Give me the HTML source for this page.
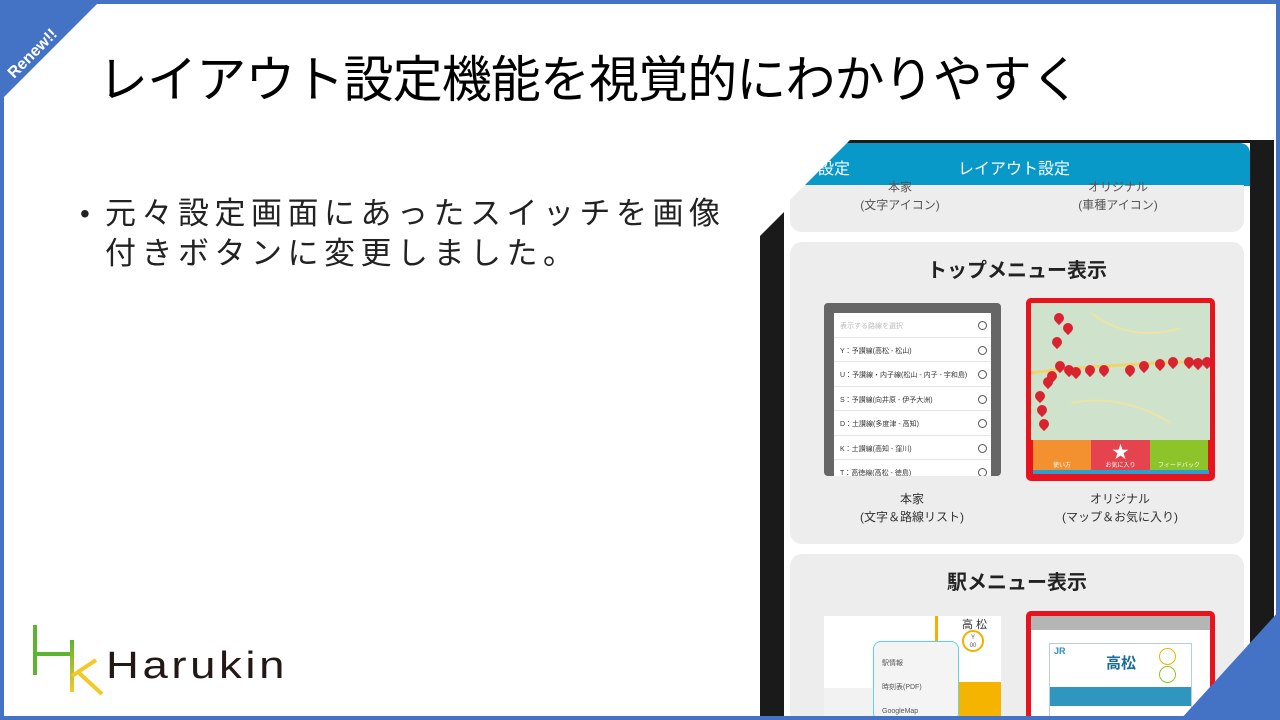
<!DOCTYPE html>
<html><head><meta charset="utf-8"><style>
*{margin:0;padding:0;box-sizing:border-box}
html,body{width:1280px;height:720px;overflow:hidden}
body{background:#fff;font-family:"Liberation Sans","Noto Sans CJK JP",sans-serif;position:relative}
.abs{position:absolute}
.frame{left:0;top:0;width:1280px;height:720px;border:4px solid #4472c4}
.title{left:98px;top:40px;font-size:50px;color:#000;white-space:nowrap;letter-spacing:-0.9px}
.bullet{left:105px;top:194px;font-size:31px;line-height:40px;color:#222;letter-spacing:5.5px;white-space:nowrap}
.card{background:#ededed;border-radius:12px}
.t{font-size:12px;color:#333;text-align:center;line-height:18px}
.pin{position:absolute;width:10px;height:10px;background:#d9232e;border-radius:50% 50% 50% 0;transform:rotate(-45deg)}
.row{height:24.5px;border-bottom:1px solid #e6e6e6;font-size:7px;color:#333;padding:8px 0 0 6px;position:relative}
.row:after{content:"";position:absolute;right:4px;top:8px;width:7px;height:7px;border:1px solid #555;border-radius:50%}
</style></head><body>
<div class="abs title">レイアウト設定機能を視覚的にわかりやすく</div>
<div class="abs" style="left:80px;top:194px;font-size:28px;line-height:40px;color:#222">•</div>
<div class="abs bullet">元々設定画面にあったスイッチを画像<br>付きボタンに変更しました。</div>

<div class="abs" style="left:0;top:0;width:1280px;height:720px;overflow:hidden">
<div class="abs" style="left:760px;top:140px;width:514px;height:580px;background:#1a1a1a"></div>
<div class="abs" style="left:784px;top:143px;width:466px;height:577px;background:#fff"></div>
<div class="abs" style="left:784px;top:143px;width:466px;height:43px;background:#0899c9;border-radius:0 10px 0 0"></div>
<div class="abs" style="left:818px;top:155px;color:#fff;font-size:16px">設定</div>
<div class="abs" style="left:958px;top:155px;color:#fff;font-size:16px">レイアウト設定</div>
<div class="abs card" style="left:790px;top:185px;width:454px;height:47px;border-radius:0 0 12px 12px"></div>
<div class="abs t" style="left:840px;top:178px;width:120px;color:#555">本家<br>(文字アイコン)</div>
<div class="abs t" style="left:1058px;top:178px;width:120px;color:#555">オリジナル<br>(車種アイコン)</div>
<div class="abs card" style="left:790px;top:242px;width:454px;height:302px"></div>
<div class="abs" style="left:790px;top:254px;width:454px;text-align:center;font-size:20px;font-weight:bold;color:#222">トップメニュー表示</div>
<div class="abs" style="left:824px;top:303px;width:177px;height:173px;background:#666;border-radius:4px"></div>
<div class="abs" style="left:834px;top:313px;width:157px;height:163px;background:#fff;overflow:hidden">
<div class="row" style="color:#bbb">表示する路線を選択</div>
<div class="row">Y：予讃線(高松 - 松山)</div>
<div class="row">U：予讃線・内子線(松山 - 内子 - 宇和島)</div>
<div class="row">S：予讃線(向井原 - 伊予大洲)</div>
<div class="row">D：土讃線(多度津 - 高知)</div>
<div class="row">K：土讃線(高知 - 窪川)</div>
<div class="row">T：高徳線(高松 - 徳島)</div>
</div>
<div class="abs" style="left:1026px;top:298px;width:189px;height:183px;background:#e8131c;border-radius:5px"></div>
<div class="abs" style="left:1031px;top:303px;width:179px;height:137px;background:#cfe3cc;overflow:hidden">
<svg width="179" height="137" style="position:absolute"><path d="M0 70 Q60 62 179 58" stroke="#f2d36a" stroke-width="3" fill="none"/><path d="M60 10 Q100 40 150 25 M40 100 Q90 90 140 120" stroke="#f2e39a" stroke-width="1.5" fill="none"/></svg>
<div class="pin" style="left:23px;top:10px"></div><div class="pin" style="left:32px;top:20px"></div><div class="pin" style="left:21px;top:34px"></div>
<div class="pin" style="left:24px;top:58px"></div><div class="pin" style="left:33px;top:62px"></div><div class="pin" style="left:40px;top:64px"></div>
<div class="pin" style="left:16px;top:68px"></div><div class="pin" style="left:12px;top:74px"></div><div class="pin" style="left:54px;top:62px"></div><div class="pin" style="left:68px;top:62px"></div>
<div class="pin" style="left:94px;top:62px"></div><div class="pin" style="left:108px;top:58px"></div><div class="pin" style="left:124px;top:56px"></div><div class="pin" style="left:137px;top:54px"></div>
<div class="pin" style="left:153px;top:54px"></div><div class="pin" style="left:162px;top:55px"></div><div class="pin" style="left:171px;top:54px"></div>
<div class="pin" style="left:4px;top:88px"></div><div class="pin" style="left:6px;top:102px"></div><div class="pin" style="left:8px;top:116px"></div>
</div>
<div class="abs" style="left:1033px;top:440px;width:58px;height:30px;background:#f39131;color:#fff;font-size:6px;text-align:center;padding-top:20px">使い方</div>
<div class="abs" style="left:1091px;top:440px;width:59px;height:30px;background:#e5444f;color:#fff;font-size:6px;text-align:center;padding-top:20px">お気に入り</div>
<div class="abs" style="left:1091px;top:438px;width:59px;text-align:center;color:#fff;font-size:17px">★</div>
<div class="abs" style="left:1150px;top:440px;width:58px;height:30px;background:#8cc42a;color:#fff;font-size:6px;text-align:center;padding-top:20px">フィードバック</div>
<div class="abs" style="left:1033px;top:470px;width:176px;height:4px;background:#2a9fd0"></div>
<div class="abs t" style="left:852px;top:490px;width:120px">本家<br>(文字＆路線リスト)</div>
<div class="abs t" style="left:1050px;top:490px;width:140px">オリジナル<br>(マップ＆お気に入り)</div>
<div class="abs card" style="left:790px;top:554px;width:454px;height:170px"></div>
<div class="abs" style="left:790px;top:566px;width:454px;text-align:center;font-size:20px;font-weight:bold;color:#222">駅メニュー表示</div>
<div class="abs" style="left:824px;top:616px;width:177px;height:104px;background:#fff"></div>
<div class="abs" style="left:824px;top:688px;width:177px;height:32px;background:#f2f2f2"></div>
<div class="abs" style="left:935px;top:616px;width:3px;height:30px;background:#f3b000"></div>
<div class="abs" style="left:959px;top:682px;width:42px;height:38px;background:#f4b400"></div>
<div class="abs" style="left:962px;top:616px;font-size:11px;color:#333">高 松</div>
<div class="abs" style="left:962px;top:630px;width:22px;height:22px;border:2px solid #f3b000;border-radius:50%;font-size:6px;text-align:center;color:#555;line-height:8px;padding-top:2px">Y<br>00</div>
<div class="abs" style="left:873px;top:641px;width:86px;height:80px;background:#f4f4f4;border:1.5px solid #5cd4dc;border-radius:8px;font-size:7px;color:#555;padding:10px 0 0 8px;line-height:24px">駅情報<br>時刻表(PDF)<br>GoogleMap</div>
<div class="abs" style="left:1026px;top:611px;width:189px;height:109px;background:#e8131c;border-radius:5px 5px 0 0"></div>
<div class="abs" style="left:1031px;top:616px;width:179px;height:104px;background:#fff"></div>
<div class="abs" style="left:1031px;top:616px;width:179px;height:14px;background:#b5b5b5"></div>
<div class="abs" style="left:1049px;top:643px;width:143px;height:92px;border:1px solid #bcd;background:#fff"></div>
<div class="abs" style="left:1054px;top:646px;font-size:9px;color:#2a8fc4;font-weight:bold">JR</div>
<div class="abs" style="left:1106px;top:652px;font-size:15px;color:#1b6b98;font-weight:bold">高松</div>
<div class="abs" style="left:1159px;top:648px;width:17px;height:17px;border:1.5px solid #f3b000;border-radius:50%"></div>
<div class="abs" style="left:1159px;top:666px;width:17px;height:17px;border:1.5px solid #8cc42a;border-radius:50%"></div>
<div class="abs" style="left:1050px;top:687px;width:141px;height:19px;background:#2f96c0"></div>
</div>
<svg class="abs" style="left:0;top:0" width="1280" height="720">
<polygon points="758,138 852,138 784,206 784,212 760,236 758,236" fill="#fff"/>
<polygon points="0,0 101,0 0,101" fill="#4472c4"/>
<text x="0" y="0" transform="translate(14,79) rotate(-45)" fill="#fff" font-family="Liberation Sans" font-weight="bold" font-size="16">Renew!!</text>
<polygon points="1280,610 1280,720 1180,720" fill="#4472c4"/>
</svg>
<div class="abs frame"></div>
<svg class="abs" style="left:28px;top:620px" width="270" height="80">
<defs><linearGradient id="g" gradientUnits="userSpaceOnUse" x1="0" y1="20" x2="0" y2="72"><stop offset="0" stop-color="#5cb531"/><stop offset="1" stop-color="#f3c928"/></linearGradient></defs>
<path d="M7 5 V55 M7 34 H42" stroke="#5cb531" stroke-width="4" fill="none"/>
<path d="M44 20 V72" stroke="url(#g)" stroke-width="4" fill="none"/>
<path d="M44 56 L68 40 M50 52 L74 74" stroke="#f3c928" stroke-width="4" fill="none"/>
<text x="78" y="58" font-family="Liberation Sans" font-size="38" fill="#231815" letter-spacing="3" textLength="182" lengthAdjust="spacingAndGlyphs">Harukin</text>
</svg>
</body></html>
